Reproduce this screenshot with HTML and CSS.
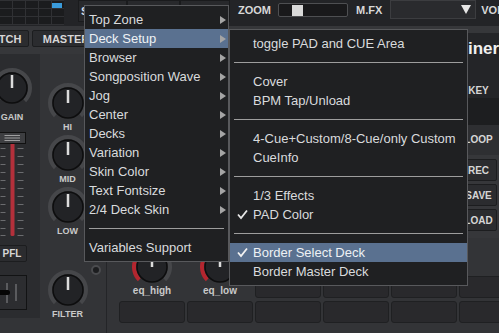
FILE: index.html
```html
<!DOCTYPE html>
<html lang="en">
<head>
  <meta charset="UTF-8">
  <title>Skin options</title>
  <link rel="stylesheet" href="styles.css">
</head>
<body>
<div class="skin">

  <header class="topbar">
    <div class="padgrid">
      <i></i><i></i><i></i><i></i><i class="on"></i>
      <i></i><i></i><i></i><i></i><i></i>
      <i></i><i></i><i></i><i></i><i></i>
    </div>
    <div class="tzbtns">
      <span class="tz tz-a">S</span>
      <span class="tz tz-b"></span>
      <span class="tz tz-c"></span>
    </div>
    <div class="zoomgrp">
      <span class="lbl">ZOOM</span>
      <div class="slider"><div class="thumb"></div></div>
      <span class="lbl">M.FX</span>
      <div class="dropdown"><span class="caret"></span></div>
      <span class="lbl">VOL</span>
    </div>
  </header>

  <div class="deck">
    <div class="btnrow">
      <span class="btn btn-match">MATCH</span>
      <span class="btn btn-master">MASTER</span>
    </div>

    <!-- channel strip -->
    <div class="chan">
      <div class="chan-inner">
        <svg class="knob" width="40" height="40" viewBox="0 0 40 40">
          <path d="M7.27 32.73 A18 18 0 1 1 32.73 32.73" fill="none" stroke="#46474a" stroke-width="4"/>
          <circle cx="20" cy="20" r="15" fill="#222326" stroke="#0d0d0e" stroke-width="1.5"/>
          <line x1="20" y1="7" x2="20" y2="20" stroke="#dcdcdc" stroke-width="2.5"/>
        </svg>
        <span class="klbl gain-lbl">GAIN</span>
        <svg class="fader" width="27" height="108" viewBox="0 0 27 108">
          <g stroke="#6b6c6f" stroke-width="1">
            <line x1="1.5" y1="16.5" x2="6.5" y2="16.5"/><line x1="18.5" y1="16.5" x2="24.5" y2="16.5"/>
            <line x1="1.5" y1="24.5" x2="6.5" y2="24.5"/><line x1="18.5" y1="24.5" x2="24.5" y2="24.5"/>
            <line x1="1.5" y1="32.5" x2="6.5" y2="32.5"/><line x1="18.5" y1="32.5" x2="24.5" y2="32.5"/>
            <line x1="1.5" y1="40.5" x2="6.5" y2="40.5"/><line x1="18.5" y1="40.5" x2="24.5" y2="40.5"/>
            <line x1="1.5" y1="48.5" x2="6.5" y2="48.5"/><line x1="18.5" y1="48.5" x2="24.5" y2="48.5"/>
            <line x1="1.5" y1="56.5" x2="6.5" y2="56.5"/><line x1="18.5" y1="56.5" x2="24.5" y2="56.5"/>
            <line x1="1.5" y1="64.5" x2="6.5" y2="64.5"/><line x1="18.5" y1="64.5" x2="24.5" y2="64.5"/>
            <line x1="1.5" y1="72.5" x2="6.5" y2="72.5"/><line x1="18.5" y1="72.5" x2="24.5" y2="72.5"/>
            <line x1="1.5" y1="80.5" x2="6.5" y2="80.5"/><line x1="18.5" y1="80.5" x2="24.5" y2="80.5"/>
            <line x1="1.5" y1="88.5" x2="6.5" y2="88.5"/><line x1="18.5" y1="88.5" x2="24.5" y2="88.5"/>
            <line x1="1.5" y1="96.5" x2="6.5" y2="96.5"/><line x1="18.5" y1="96.5" x2="24.5" y2="96.5"/>
            <line x1="1.5" y1="103.5" x2="6.5" y2="103.5"/><line x1="18.5" y1="103.5" x2="24.5" y2="103.5"/>
          </g>
          <rect x="11.5" y="10" width="4" height="94" rx="1.5" fill="#b3303b"/>
          <rect x="0.5" y="0.5" width="26" height="11" fill="#3d3e41" stroke="#111" stroke-width="1"/>
          <g stroke="#b8b8b8" stroke-width="0.8">
            <line x1="5.5" y1="3.5" x2="21" y2="3.5"/>
            <line x1="5.5" y1="6" x2="21" y2="6"/>
            <line x1="5.5" y1="8.5" x2="21" y2="8.5"/>
          </g>
        </svg>
        <span class="btn pfl">PFL</span>
        <div class="xbox">
          <svg width="28" height="33" viewBox="0 0 28 33">
            <line x1="9" y1="7" x2="9" y2="27" stroke="#6a6b6e" stroke-width="1.5"/>
            <line x1="18" y1="8" x2="18" y2="25" stroke="#6a6b6e" stroke-width="1.5"/>
            <rect x="0" y="14" width="12" height="5" rx="2.5" fill="#050505"/>
          </svg>
        </div>
      </div>
    </div>

    <!-- eq column -->
    <div class="eqs">
      <div class="kblock">
        <svg class="knob" width="40" height="40" viewBox="0 0 40 40">
          <path d="M7.27 32.73 A18 18 0 1 1 32.73 32.73" fill="none" stroke="#46474a" stroke-width="4"/>
          <circle cx="20" cy="20" r="15" fill="#222326" stroke="#0d0d0e" stroke-width="1.5"/>
          <line x1="20" y1="7" x2="20" y2="20" stroke="#dcdcdc" stroke-width="2.5"/>
        </svg>
        <span class="klbl">HI</span>
      </div>
      <div class="kblock">
        <svg class="knob" width="40" height="40" viewBox="0 0 40 40">
          <path d="M7.27 32.73 A18 18 0 1 1 32.73 32.73" fill="none" stroke="#46474a" stroke-width="4"/>
          <circle cx="20" cy="20" r="15" fill="#222326" stroke="#0d0d0e" stroke-width="1.5"/>
          <line x1="20" y1="7" x2="20" y2="20" stroke="#dcdcdc" stroke-width="2.5"/>
        </svg>
        <span class="klbl">MID</span>
      </div>
      <div class="kblock">
        <svg class="knob" width="40" height="40" viewBox="0 0 40 40">
          <path d="M7.27 32.73 A18 18 0 1 1 32.73 32.73" fill="none" stroke="#46474a" stroke-width="4"/>
          <circle cx="20" cy="20" r="15" fill="#222326" stroke="#0d0d0e" stroke-width="1.5"/>
          <line x1="20" y1="7" x2="20" y2="20" stroke="#dcdcdc" stroke-width="2.5"/>
        </svg>
        <span class="klbl">LOW</span>
      </div>
      <div class="kblock filter">
        <span class="led"></span>
        <svg class="knob" width="40" height="40" viewBox="0 0 40 40">
          <path d="M7.27 32.73 A18 18 0 1 1 32.73 32.73" fill="none" stroke="#46474a" stroke-width="4"/>
          <circle cx="20" cy="20" r="15" fill="#222326" stroke="#0d0d0e" stroke-width="1.5"/>
          <line x1="20" y1="7" x2="20" y2="20" stroke="#dcdcdc" stroke-width="2.5"/>
        </svg>
        <span class="klbl">FILTER</span>
      </div>
    </div>

    <div class="mid"></div>

    <!-- right side column -->
    <div class="side">
      <div class="title">
        <div class="title-name">iner</div>
        <div class="title-key">KEY</div>
      </div>
      <div class="band"></div>
      <div class="loopbar">LOOP</div>
      <span class="btn sbtn">REC</span>
      <span class="btn sbtn">SAVE</span>
      <span class="btn sbtn">LOAD</span>
    </div>

    <!-- effect knobs and pads -->
    <div class="pads">
      <div class="eqknob">
        <svg width="40" height="40" viewBox="0 0 40 40">
          <path d="M7.27 32.73 A18 18 0 0 1 20 2" fill="none" stroke="#b3262f" stroke-width="4"/>
          <path d="M20 2 A18 18 0 0 1 32.73 32.73" fill="none" stroke="#46474a" stroke-width="4"/>
          <circle cx="20" cy="20" r="15" fill="#222326" stroke="#0d0d0e" stroke-width="1.5"/>
          <line x1="20" y1="7" x2="20" y2="20" stroke="#dcdcdc" stroke-width="2.5"/>
        </svg>
        <span class="eqlbl">eq_high</span>
      </div>
      <div class="eqknob">
        <svg width="40" height="40" viewBox="0 0 40 40">
          <path d="M7.27 32.73 A18 18 0 0 1 20 2" fill="none" stroke="#b3262f" stroke-width="4"/>
          <path d="M20 2 A18 18 0 0 1 32.73 32.73" fill="none" stroke="#46474a" stroke-width="4"/>
          <circle cx="20" cy="20" r="15" fill="#222326" stroke="#0d0d0e" stroke-width="1.5"/>
          <line x1="20" y1="7" x2="20" y2="20" stroke="#dcdcdc" stroke-width="2.5"/>
        </svg>
        <span class="eqlbl">eq_low</span>
      </div>
      <div class="pad top"></div><div class="pad top"></div><div class="pad top"></div><div class="pad top"></div>
      <div class="pad"></div><div class="pad"></div><div class="pad"></div>
      <div class="pad"></div><div class="pad"></div><div class="pad"></div>
    </div>
  </div>

  <!-- context menu -->
  <div class="menu main">
    <div class="item">Top Zone<span class="arrow"></span></div>
    <div class="item hl">Deck Setup<span class="arrow"></span></div>
    <div class="item">Browser<span class="arrow"></span></div>
    <div class="item">Songposition Wave<span class="arrow"></span></div>
    <div class="item">Jog<span class="arrow"></span></div>
    <div class="item">Center<span class="arrow"></span></div>
    <div class="item">Decks<span class="arrow"></span></div>
    <div class="item">Variation<span class="arrow"></span></div>
    <div class="item">Skin Color<span class="arrow"></span></div>
    <div class="item">Text Fontsize<span class="arrow"></span></div>
    <div class="item">2/4 Deck Skin<span class="arrow"></span></div>
    <div class="sep"></div>
    <div class="item">Variables Support</div>
  </div>

  <div class="menu sub">
    <div class="item">toggle PAD and CUE Area</div>
    <div class="sep"></div>
    <div class="item">Cover</div>
    <div class="item">BPM Tap/Unload</div>
    <div class="sep"></div>
    <div class="item">4-Cue+Custom/8-Cue/only Custom</div>
    <div class="item">CueInfo</div>
    <div class="sep"></div>
    <div class="item">1/3 Effects</div>
    <div class="item"><svg class="check" width="11" height="11" viewBox="0 0 11 11"><path d="M1 5.5 L4 9 L10 1.5" fill="none" stroke="#e6e6e6" stroke-width="1.8"/></svg>PAD Color</div>
    <div class="sep"></div>
    <div class="item hl"><svg class="check" width="11" height="11" viewBox="0 0 11 11"><path d="M1 5.5 L4 9 L10 1.5" fill="none" stroke="#f2f2f2" stroke-width="1.8"/></svg>Border Select Deck</div>
    <div class="item">Border Master Deck</div>
  </div>

</div>
</body>
</html>
```
FILE: styles.css
```css
body {
  margin: 0;
  background: #333437;
  font-family: 'Liberation Sans', Arial, sans-serif;
}

.skin {
  position: relative;
  width: 499px;
  height: 333px;
  overflow: hidden;
  display: flex;
  flex-direction: column;
}

/* top zone */
.topbar {
  height: 26px;
  flex-shrink: 0;
  display: flex;
  align-items: flex-start;
  background: #232427;
}

.padgrid {
  display: grid;
  grid-template-columns: repeat(5, 12px);
  grid-template-rows: repeat(3, 7px);
  gap: 1px;
  padding: 1px 0 1px 0;
  background: #303134;
}

.padgrid i {
  background: #1b1c1e;
}

.padgrid i.on {
  position: relative;
}

.padgrid i.on::after {
  content: "";
  position: absolute;
  left: 0;
  right: 2px;
  top: 2px;
  bottom: 0;
  background: #3a9bdb;
}

.tzbtns {
  display: flex;
  margin-left: 14px;
  height: 22px;
}

.tz {
  background: #28292c;
  border: 1px solid #1a1b1d;
  color: #d3dbe3;
  font-size: 11px;
  font-weight: bold;
  padding: 4px 0 0 2px;
  box-sizing: border-box;
  height: 22px;
}

.tz-a { width: 49px; }
.tz-b { width: 53px; }
.tz-c { width: 50px; }

.zoomgrp {
  display: flex;
  align-items: center;
  height: 20px;
  margin-left: 8px;
}

.lbl {
  color: #d8d8d8;
  font-size: 11px;
  font-weight: bold;
}

.slider {
  width: 70px;
  height: 14px;
  margin: 0 8px 0 7px;
  box-sizing: border-box;
  border: 1px solid #4e4f52;
  border-radius: 2px;
  background: #19191b;
  padding: 1px 0 0 13px;
}

.thumb {
  width: 11px;
  height: 11px;
  background: #d9d9d9;
}

.dropdown {
  width: 86px;
  height: 19px;
  margin: 0 5px 0 8px;
  align-self: flex-start;
  box-sizing: border-box;
  background: #2a2b2e;
  border: 1px solid #3c3d40;
  display: flex;
  align-items: center;
  justify-content: flex-end;
  padding-right: 4px;
}

.caret {
  width: 0;
  height: 0;
  border-left: 5px solid transparent;
  border-right: 5px solid transparent;
  border-top: 9px solid #e6e6e6;
}

/* deck body */
.deck {
  flex: 1;
  display: grid;
  grid-template-columns: 40px 67px 12px 339px 41px;
  grid-template-rows: 28px 184px 1fr;
  grid-template-areas:
    "btns btns btns btns side"
    "chan eqs  gap  mid  side"
    "chan eqs  gap  pads pads";
}

.btnrow {
  grid-area: btns;
  display: flex;
  align-items: flex-start;
  gap: 3px;
  padding-top: 4px;
  background: #36373a;
}

.btn {
  display: flex;
  align-items: center;
  justify-content: center;
  box-sizing: border-box;
  height: 17px;
  background: #2b2c2f;
  border: 1px solid #1c1d1f;
  border-radius: 2px;
  color: #d6d6d6;
  font-size: 11px;
  font-weight: bold;
  flex-shrink: 0;
}

.btn-match {
  width: 54px;
  margin-left: -25px;
}

.btn-master {
  width: 68px;
}

.chan {
  grid-area: chan;
  height: 264px;
  background: #2b2c2f;
  overflow: hidden;
}

.chan-inner {
  width: 40px;
  margin-left: -8px;
  padding-top: 14px;
  display: flex;
  flex-direction: column;
  align-items: center;
}

.knob {
  display: block;
}

.klbl {
  color: #c9c9c9;
  font-size: 9px;
  font-weight: bold;
  line-height: 10px;
  margin-top: -1px;
}

.gain-lbl {
  margin-top: 4px;
}

.fader {
  display: block;
  margin-top: 10px;
}

.pfl {
  width: 30px;
  margin-top: 5px;
  font-size: 10px;
}

.xbox {
  width: 30px;
  height: 35px;
  margin-top: 13px;
  box-sizing: border-box;
  border: 1px solid #121314;
  background: #2c2d30;
}

.xbox svg {
  display: block;
}

.eqs {
  grid-area: eqs;
  background: #333437;
  border-right: 1px solid #242528;
  padding: 29px 11px 0 0;
  display: flex;
  flex-direction: column;
  align-items: center;
  gap: 3px;
}

.kblock {
  display: flex;
  flex-direction: column;
  align-items: center;
}

.kblock.filter {
  position: relative;
  margin-top: 31px;
}

.led {
  position: absolute;
  top: -5px;
  right: -13px;
  width: 6px;
  height: 6px;
  border-radius: 50%;
  background: #1c1d1f;
  border: 2px solid #4a4b4e;
}

.mid {
  grid-area: mid;
  background: #2b2c2f;
}

/* right column */
.side {
  grid-area: side;
  background: #36373a;
  display: flex;
  flex-direction: column;
  text-align: center;
}

.title {
  margin-top: 7px;
  height: 65px;
  background: #242528;
}

.title-name {
  color: #f0f0f0;
  font-size: 17px;
  font-weight: bold;
  line-height: 20px;
  text-align: left;
  padding: 6px 0 0 10px;
  white-space: nowrap;
}

.title-key {
  color: #d6d6d6;
  font-size: 10px;
  font-weight: bold;
  line-height: 12px;
  margin-top: 26px;
}

.band {
  height: 27px;
  background: #1d1e20;
}

.loopbar {
  height: 30px;
  line-height: 30px;
  background: #2e2f32;
  color: #d6d6d6;
  font-size: 10px;
  font-weight: bold;
  margin-bottom: 4px;
}

.sbtn {
  height: 22px;
  margin: 0 2px 3px 2px;
  font-size: 10px;
}

/* pads */
.pads {
  grid-area: pads;
  display: grid;
  grid-template-columns: repeat(6, 66px);
  grid-template-rows: 60px 22px;
  gap: 3px 2px;
  background: #333437;
}

.eqknob {
  display: flex;
  flex-direction: column;
  align-items: center;
  padding-top: 9px;
}

.eqknob svg {
  display: block;
}

.eqlbl {
  color: #c9c9c9;
  font-size: 10px;
  font-weight: bold;
  line-height: 10px;
  margin-top: -1px;
}

.pad {
  background: #29292c;
  border: 1px solid #1f2022;
  border-radius: 3px;
}

.pad.top {
  align-self: end;
  height: 22px;
  box-sizing: border-box;
}

/* context menu */
.menu {
  position: absolute;
  background: #1f2022;
  border: 1px solid #58595c;
  padding: 4px 0;
  color: #d9dbdd;
  font-size: 13px;
}

.menu.main {
  left: 84px;
  top: 5px;
  width: 143px;
}

.menu.sub {
  left: 229px;
  top: 29px;
  width: 237px;
}

.item {
  position: relative;
  height: 19px;
  line-height: 19px;
  padding-left: 4px;
  white-space: nowrap;
}

.sub .item {
  padding-left: 23px;
}

.item.hl {
  background: #5a7190;
  color: #eef1f5;
}

.arrow {
  position: absolute;
  right: 2px;
  top: 6px;
  width: 0;
  height: 0;
  border-top: 4px solid transparent;
  border-bottom: 4px solid transparent;
  border-left: 6px solid #a5a5a5;
}

.check {
  position: absolute;
  left: 7px;
  top: 4px;
}

.sep {
  height: 19px;
  display: flex;
  align-items: center;
}

.sep::before {
  content: "";
  flex: 1;
  height: 1px;
  margin: 0 4px;
  background: #9d9d9d;
}
```
